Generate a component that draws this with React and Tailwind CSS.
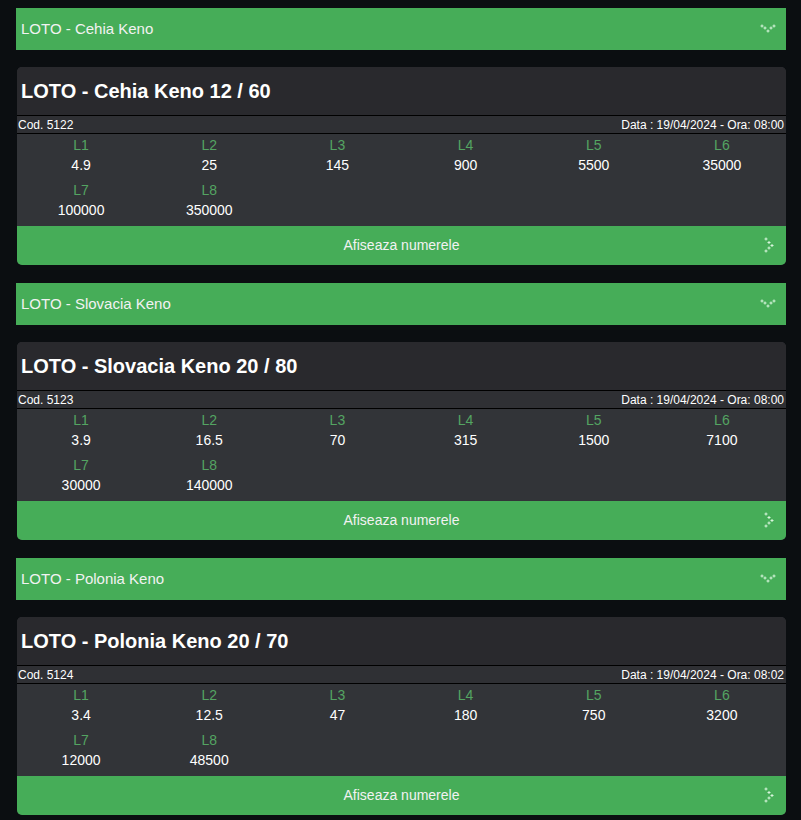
import React from "react";

const games = [
  {
    name: "LOTO - Cehia Keno",
    title: "LOTO - Cehia Keno 12 / 60",
    cod: "5122",
    when: "Data : 19/04/2024 - Ora: 08:00",
    odds: ["4.9", "25", "145", "900", "5500", "35000", "100000", "350000"],
  },
  {
    name: "LOTO - Slovacia Keno",
    title: "LOTO - Slovacia Keno 20 / 80",
    cod: "5123",
    when: "Data : 19/04/2024 - Ora: 08:00",
    odds: ["3.9", "16.5", "70", "315", "1500", "7100", "30000", "140000"],
  },
  {
    name: "LOTO - Polonia Keno",
    title: "LOTO - Polonia Keno 20 / 70",
    cod: "5124",
    when: "Data : 19/04/2024 - Ora: 08:02",
    odds: ["3.4", "12.5", "47", "180", "750", "3200", "12000", "48500"],
  },
];

// dotted chevrons, like the icon font in the original
const DotsDown = () => (
  <svg width="16" height="10" viewBox="0 0 16 10" fill="#d8f5dc">
    {[
      [2, 2],
      [5, 4],
      [8, 7],
      [11, 4],
      [14, 2],
    ].map(([x, y], i) => (
      <g key={i}>
        <rect x={x - 1.5} y={y - 0.5} width="3" height="1" />
        <rect x={x - 0.5} y={y - 1.5} width="1" height="3" />
      </g>
    ))}
  </svg>
);

const DotsRight = () => (
  <svg width="10" height="16" viewBox="0 0 10 16" fill="#d8f5dc">
    {[
      [2, 2],
      [5, 5.5],
      [8, 8.5],
      [5, 11],
      [2, 14],
    ].map(([x, y], i) => (
      <g key={i}>
        <rect x={x - 1.5} y={y - 0.5} width="3" height="1" />
        <rect x={x - 0.5} y={y - 1.5} width="1" height="3" />
      </g>
    ))}
  </svg>
);

function Game({ g }) {
  return (
    <div>
      <div className="h-[42px] bg-[#46ad58] flex items-center justify-between pl-[5px] pr-[10px] text-[15px] text-[#f2f2f2]">
        <span>{g.name}</span>
        <DotsDown />
      </div>

      <div className="mt-[17px] mb-[18px] ml-px rounded-[5px] overflow-hidden bg-[#323438]">
        <div className="h-[48px] bg-[#29292d] flex items-center px-[4px] pb-[1px]">
          <h2 className="text-[20px] font-bold text-white">{g.title}</h2>
        </div>
        <div className="h-[19px] bg-[#2f3034] border-y border-black flex items-center justify-between pl-[1px] pr-[2px] text-[12px] text-white">
          <span>Cod. {g.cod}</span>
          <span>{g.when}</span>
        </div>
        <div className="grid grid-cols-6 gap-y-[5px] pt-[1px] pb-[6px]">
          {g.odds.map((v, i) => (
            <div key={i} className="flex flex-col items-center text-[14px] leading-[20px]">
              <span className="text-[#54a462]">L{i + 1}</span>
              <span className="text-white">{v}</span>
            </div>
          ))}
        </div>
        <div className="h-[39px] bg-[#46ad58] relative flex items-center justify-center text-[14px] text-[#f2f2f2]">
          <span>Afiseaza numerele</span>
          <span className="absolute right-[12px] top-[11px]">
            <DotsRight />
          </span>
        </div>
      </div>
    </div>
  );
}

export default function App() {
  return (
    <div
      className="min-h-[820px] bg-[#0b0e11] pl-4 pr-[15px] pt-[8px]"
      style={{ fontFamily: '"Liberation Sans", Arial, sans-serif' }}
    >
      {games.map((g) => (
        <Game key={g.cod} g={g} />
      ))}
    </div>
  );
}
